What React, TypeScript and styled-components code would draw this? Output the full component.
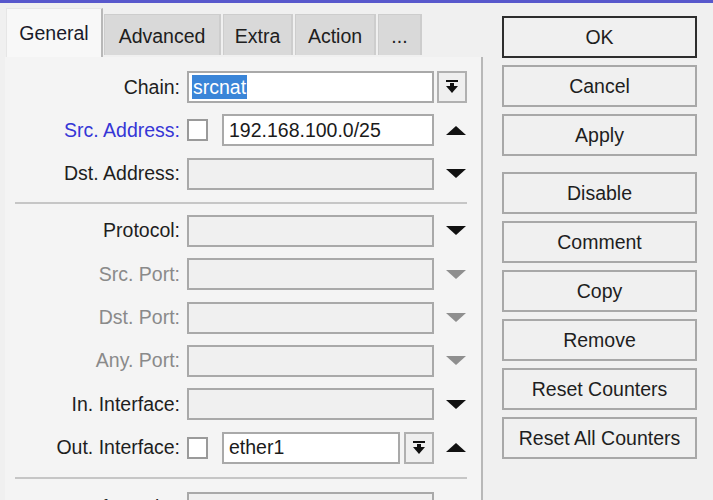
import React from "react";
import styled, { createGlobalStyle } from "styled-components";

const Global = createGlobalStyle`
  html, body { margin: 0; padding: 0; background: #f0f0f0; }
  body { font-family: "Liberation Sans", Arial, sans-serif; font-size: 19.5px; color: #1e1e1e; }
  #root { width: 713px; height: 500px; overflow: hidden; }
`;

const Window = styled.div`
  width: 713px;
  height: 500px;
  overflow: hidden;
  background: #f0f0f0;
  display: flex;
  flex-direction: column;
`;

const TopLine = styled.div`
  height: 3px;
  background: #5858cc;
  flex: none;
`;

const Body = styled.div`
  display: flex;
  flex: 1;
  min-height: 0;
`;

const LeftArea = styled.div`
  width: 483px;
  display: flex;
  flex-direction: column;
  flex: none;
`;

const TabBar = styled.div`
  height: 54px;
  display: flex;
  align-items: flex-end;
  padding-left: 6px;
  flex: none;
`;

const Tab = styled.div<{ $active?: boolean; $w: number }>`
  box-sizing: border-box;
  width: ${(p) => p.$w}px;
  height: ${(p) => (p.$active ? 49 : 41)}px;
  margin-bottom: ${(p) => (p.$active ? 0 : 2)}px;
  margin-right: ${(p) => (p.$active ? 1 : 2)}px;
  background: ${(p) => (p.$active ? "#f8f8f8" : "#d9d9d9")};
  border: 1px solid ${(p) => (p.$active ? "#e6e6e6" : "#cdcdcd")};
  border-right: 2px solid ${(p) => (p.$active ? "#b8b8b8" : "#cdcdcd")};
  border-bottom: none;
  display: flex;
  align-items: center;
  justify-content: center;
  padding-top: ${(p) => (p.$active ? 0 : 3)}px;
  color: ${(p) => (p.$active ? "#1a1a2a" : "#202020")};
`;

const Panel = styled.div`
  flex: 1;
  margin-left: 5px;
  background: #f4f4f4;
  border-right: 2px solid #b8b8b8;
  display: flex;
  flex-direction: column;
  gap: 11.4px;
  padding-top: 14px;
`;

const Row = styled.div`
  display: flex;
  align-items: center;
  height: 32px;
  flex: none;
`;

const Label = styled.div<{ $tone?: "blue" | "gray" | "dark" }>`
  width: 175px;
  text-align: right;
  white-space: nowrap;
  margin-right: 7px;
  color: ${(p) => (p.$tone === "blue" ? "#3636d6" : p.$tone === "gray" ? "#8a8a8a" : "#1e1e1e")};
`;

const Field = styled.div<{ $w: number; $filled?: boolean }>`
  box-sizing: border-box;
  width: ${(p) => p.$w}px;
  height: 32px;
  background: ${(p) => (p.$filled ? "#ffffff" : "#f0f0f0")};
  border: 2px solid #a9a9a9;
  display: flex;
  align-items: center;
  padding-left: ${(p) => (p.$filled ? 5 : 2)}px;
  white-space: nowrap;
  color: #1a1a1a;
`;

const Selected = styled.span`
  background: #3a85d8;
  color: #ffffff;
  padding: 0 1px;
  line-height: 24px;
`;

const Check = styled.div`
  box-sizing: border-box;
  width: 21px;
  height: 22px;
  background: #ffffff;
  border: 2px solid #9a9a9a;
  margin-right: 14px;
  flex: none;
`;

const DropBtn = styled.div<{ $gap: number }>`
  box-sizing: border-box;
  width: 30px;
  height: 32px;
  margin-left: ${(p) => p.$gap}px;
  border: 2px solid #b0b0b0;
  background: #efefef;
  display: flex;
  align-items: center;
  justify-content: center;
  flex: none;
`;

const Trailing = styled.div`
  width: 36px;
  margin-left: 3px;
  display: flex;
  align-items: center;
  flex: none;
`;

const Arrow = styled.svg`
  margin-left: 9px;
  display: block;
`;

const Separator = styled.div<{ $top: number; $bottom: number }>`
  height: 2px;
  background: #c6c6c6;
  margin: ${(p) => p.$top - 11.4}px 14px ${(p) => p.$bottom - 11.4}px 10px;
  flex: none;
`;

const Buttons = styled.div`
  margin-left: 19px;
  width: 195px;
  padding-top: 13px;
  display: flex;
  flex-direction: column;
  gap: 7px;
`;

const Btn = styled.div<{ $default?: boolean; $spaced?: boolean }>`
  box-sizing: border-box;
  height: 42px;
  border: 2px solid ${(p) => (p.$default ? "#2e2e2e" : "#a8a8a8")};
  background: #f0f0f0;
  display: flex;
  align-items: center;
  justify-content: center;
  color: #1e1e1e;
  margin-top: ${(p) => (p.$spaced ? 9 : 0)}px;
  white-space: nowrap;
`;

const DropIcon = () => (
  <svg width="12" height="14" viewBox="0 0 12 14">
    <rect x="0" y="0" width="12" height="2" fill="#111" />
    <rect x="4" y="3" width="4" height="4" fill="#111" />
    <polygon points="0,6 12,6 6,13" fill="#111" />
  </svg>
);

const Tri = ({ up, gray }: { up?: boolean; gray?: boolean }) => (
  <Arrow width="20" height="9" viewBox="0 0 20 9">
    <polygon points={up ? "0,9 20,9 10,0" : "0,0 20,0 10,9"} fill={gray ? "#8f8f8f" : "#111"} />
  </Arrow>
);

type FieldRow = {
  label: string;
  tone?: "blue" | "gray" | "dark";
  gray?: boolean;
};

const simpleRows: FieldRow[] = [
  { label: "Protocol:" },
  { label: "Src. Port:", tone: "gray", gray: true },
  { label: "Dst. Port:", tone: "gray", gray: true },
  { label: "Any. Port:", tone: "gray", gray: true },
  { label: "In. Interface:" },
];

export default function App() {
  return (
    <>
      <Global />
      <Window>
        <TopLine />
        <Body>
          <LeftArea>
            <TabBar>
              <Tab $active $w={97}>General</Tab>
              <Tab $w={117}>Advanced</Tab>
              <Tab $w={70}>Extra</Tab>
              <Tab $w={81}>Action</Tab>
              <Tab $w={44}>...</Tab>
            </TabBar>
            <Panel>
              <Row>
                <Label>Chain:</Label>
                <Field $w={247} $filled style={{ paddingLeft: 3 }}>
                  <Selected>srcnat</Selected>
                </Field>
                <DropBtn $gap={3}>
                  <DropIcon />
                </DropBtn>
              </Row>
              <Row>
                <Label $tone="blue">Src. Address:</Label>
                <Check />
                <Field $w={212} $filled>192.168.100.0/25</Field>
                <Trailing>
                  <Tri up />
                </Trailing>
              </Row>
              <Row>
                <Label>Dst. Address:</Label>
                <Field $w={247} />
                <Trailing>
                  <Tri />
                </Trailing>
              </Row>
              <Separator $top={12} $bottom={11} />
              {simpleRows.map((r) => (
                <Row key={r.label}>
                  <Label $tone={r.tone}>{r.label}</Label>
                  <Field $w={247} />
                  <Trailing>
                    <Tri gray={r.gray} />
                  </Trailing>
                </Row>
              ))}
              <Row>
                <Label>Out. Interface:</Label>
                <Check />
                <Field $w={178} $filled>ether1</Field>
                <DropBtn $gap={4}>
                  <DropIcon />
                </DropBtn>
                <Trailing>
                  <Tri up />
                </Trailing>
              </Row>
              <Separator $top={13} $bottom={13} />
              <Row>
                <Label>In. Interface List:</Label>
                <Field $w={247} />
                <Trailing>
                  <Tri />
                </Trailing>
              </Row>
            </Panel>
          </LeftArea>
          <Buttons>
            <Btn $default>OK</Btn>
            <Btn>Cancel</Btn>
            <Btn>Apply</Btn>
            <Btn $spaced>Disable</Btn>
            <Btn>Comment</Btn>
            <Btn>Copy</Btn>
            <Btn>Remove</Btn>
            <Btn>Reset Counters</Btn>
            <Btn>Reset All Counters</Btn>
          </Buttons>
        </Body>
      </Window>
    </>
  );
}
